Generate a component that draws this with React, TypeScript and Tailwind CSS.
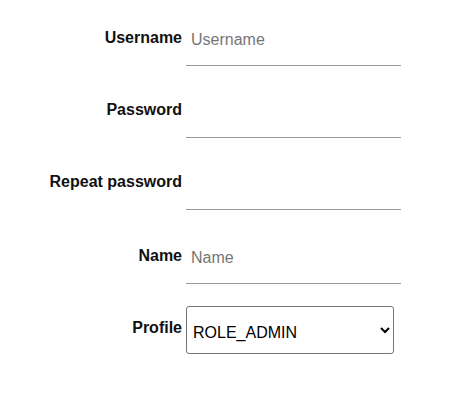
import { useState } from "react";

const fieldClass =
  "w-[215px] border-b border-[#999999] px-[5px] pt-[10px] pb-[16px] text-[16px] leading-[18px] text-black outline-none placeholder:text-[#757575]";

const labelClass =
  "w-[182px] shrink-0 text-right text-[16px] font-bold leading-[18px] text-[#111111]";

interface TextRowProps {
  label: string;
  type?: string;
  placeholder?: string;
  className?: string;
}

function TextRow({ label, type = "text", placeholder, className }: TextRowProps) {
  return (
    <div className={"flex items-start gap-[4px] " + (className ?? "")}>
      <label className={labelClass + " mt-[8px]"}>{label}</label>
      <input type={type} placeholder={placeholder} className={fieldClass} />
    </div>
  );
}

export default function App() {
  const [profile, setProfile] = useState("ROLE_ADMIN");

  return (
    <div className="min-h-[403px] bg-white pt-[21px] font-['Liberation_Sans',Arial,sans-serif]">
      <form className="flex flex-col gap-[27px]">
        <TextRow label="Username" placeholder="Username" />
        <TextRow label="Password" type="password" />
        <TextRow label="Repeat password" type="password" />
        <TextRow label="Name" placeholder="Name" className="mt-[2px]" />

        <div className="-mt-[5px] flex items-start gap-[4px]">
          <label className={labelClass + " mt-[13px]"}>Profile</label>
          <select
            value={profile}
            onChange={(e) => setProfile(e.target.value)}
            className="h-[48px] w-[208px] rounded-[3px] border border-[#767676] bg-white pt-[4px] pl-[2px] text-[16px] text-black"
          >
            <option value="ROLE_ADMIN">ROLE_ADMIN</option>
            <option value="ROLE_USER">ROLE_USER</option>
          </select>
        </div>
      </form>
    </div>
  );
}
